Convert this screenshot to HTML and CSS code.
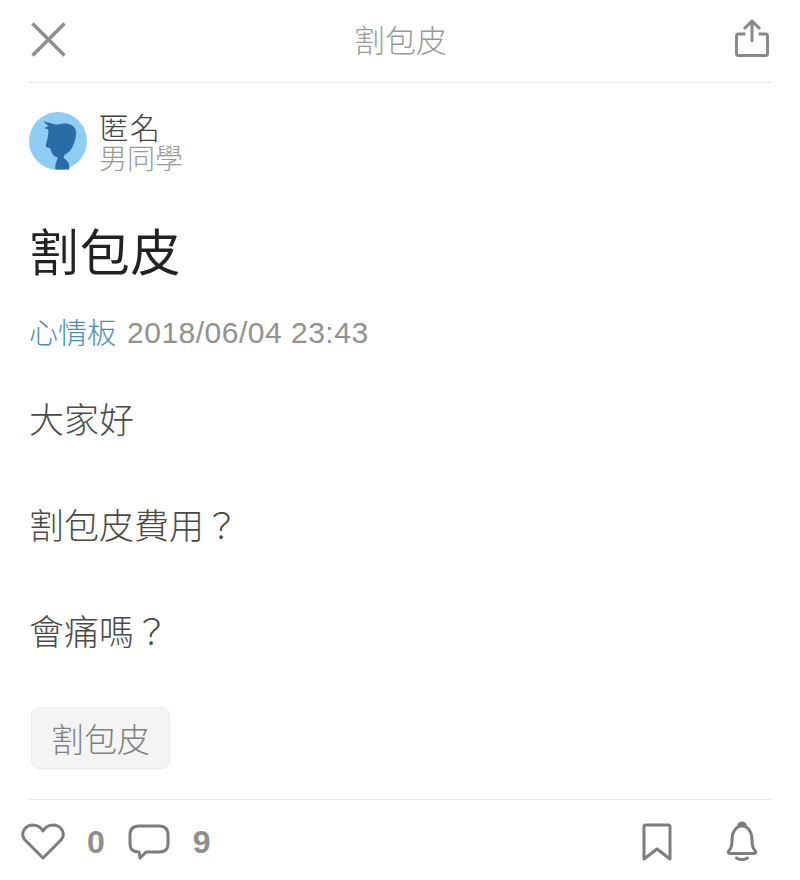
FILE: index.html
```html
<!DOCTYPE html>
<html lang="zh-Hant">
<head>
<meta charset="utf-8">
<title>割包皮</title>
<link rel="stylesheet" href="styles.css">
</head>
<body>
<div class="page">
  <header class="topbar">
    <svg class="icon-close" width="35" height="35" viewBox="0 0 35 35"><path d="M1.500 1.500L33.500 33.500M33.500 1.500L1.500 33.500" fill="none" stroke="#8f8f8f" stroke-width="3.500"/></svg>
    <div class="topbar-title">割包皮</div>
    <svg class="icon-share" width="34" height="38" viewBox="0 0 34 38"><path d="M10.500 15H3.500a2 2 0 0 0-2 2V34.500a2 2 0 0 0 2 2H30.500a2 2 0 0 0 2-2V17a2 2 0 0 0-2-2H23.500M17 23V2M9 10L17 2L25 10" fill="none" stroke="#8a8a8a" stroke-width="3"/></svg>
  </header>
  <section class="author">
    <svg class="avatar" width="58" height="58" viewBox="0 0 58 58">
      <circle cx="29" cy="29" r="29" fill="#90cdf2"/>
      <path d="M14.300 9.300L27.700 12.700C31 12 36 11 39 11.700C43 12.500 46 15 47 19C47.700 24 45.500 31 43 36C41 39 39 41 36 42.500C35 44 34.500 45 34.500 46C37.500 47.500 39.500 50 40 53C40.500 55 40.500 56 40 57.500H26.500C26 54 26.500 51 27.700 49C28 47.500 28.500 46.500 29.300 46C27 45 25 44 24 42.700C22.500 40.500 21.500 38 21 36C18.500 36 16.500 35 16.700 33.300C17 31 18.500 28 18.800 24.300C19.100 22 19.500 20 19.500 17.700L15.300 16L19.300 14.300Z" fill="#2b6ba8"/>
    </svg>
    <div class="author-text">
      <div class="author-name">匿名</div>
      <div class="author-role">男同學</div>
    </div>
  </section>
  <h1 class="post-title">割包皮</h1>
  <div class="meta"><span class="board">心情板</span><span class="date">2018/06/04 23:43</span></div>
  <article class="body">
    <p>大家好</p>
    <p>割包皮費用？</p>
    <p>會痛嗎？</p>
  </article>
  <div class="tag">割包皮</div>
  <footer class="actions">
    <svg class="icon-heart" width="44" height="38" viewBox="0 0 44 38"><path d="M22 35L4 17C-1 11 3 3 11 2C16 2 20 4 22 8C24 4 28 2 33 2C41 3 45 11 40 17Z" fill="none" stroke="#7d7d7d" stroke-width="3" stroke-linejoin="round"/></svg>
    <span class="count count-like">0</span>
    <svg class="icon-comment" width="42" height="36" viewBox="0 0 42 36"><path d="M11 2H31C37 2 40 5 40 11V20C40 25 37 28 31 28H18L12 34L11 28C5 28 2 25 2 20V11C2 5 5 2 11 2Z" fill="none" stroke="#7d7d7d" stroke-width="3" stroke-linejoin="round"/></svg>
    <span class="count count-comment">9</span>
    <svg class="icon-bookmark" width="30" height="38" viewBox="0 0 30 38"><path d="M2 36V3.500A1.500 1.500 0 0 1 3.500 2H26.500A1.500 1.500 0 0 1 28 3.500V36L15 26Z" fill="none" stroke="#7d7d7d" stroke-width="3" stroke-linejoin="round"/></svg>
    <svg class="icon-bell" width="32" height="40" viewBox="0 0 32 40"><path d="M12.500 5.500A3.500 3.500 0 1 1 19.500 5.500M6 19C6 11 10 5 16 5C22 5 26 11 26 19C26 25 26.500 27 28.500 29C30.500 31 30 32.500 28 32.500H4C2 32.500 1.500 31 3.500 29C5.500 27 6 25 6 19ZM10.500 37C13 39 19 39 21.500 37" fill="none" stroke="#7d7d7d" stroke-width="3" stroke-linecap="round"/></svg>
  </footer>
</div>
</body>
</html>
```
FILE: styles.css
```css
* { box-sizing: border-box; }
html, body { margin: 0; padding: 0; background: #fff; }
body {
  font-family: "Noto Sans CJK TC", "Liberation Sans", sans-serif;
  font-weight: 300;
}
.page {
  width: 800px;
  height: 880px;
  padding: 0 29px;
  overflow: hidden;
}
.topbar {
  height: 83px;
  border-bottom: 1px solid #e8e8e8;
  display: flex;
  align-items: center;
  justify-content: space-between;
  padding: 0 2px 3px 2px;
}
.topbar-title {
  font-size: 31px;
  line-height: 40px;
  color: #999;
  margin-top: -1px;
}
.icon-share { margin-top: -3px; }
.author {
  display: flex;
  align-items: flex-start;
  gap: 12px;
  margin-top: 29px;
  height: 58px;
}
.author-text { display: flex; flex-direction: column; margin-top: -1px; }
.author-name { font-size: 30px; line-height: 30px; color: #444; letter-spacing: 1px; }
.author-role { font-size: 28px; line-height: 30px; color: #999; margin-top: 1px; }
.post-title {
  margin: 46px 0 0;
  font-size: 50px;
  line-height: 66px;
  font-weight: 400;
  color: #222;
  letter-spacing: 0.7px;
}
.meta {
  margin-top: 29px;
  font-size: 29px;
  line-height: 42px;
  white-space: nowrap;
  display: flex;
  gap: 11px;
}
.board { color: #4a8db8; margin-top: -1px; }
.date {
  font-family: "Liberation Sans", sans-serif;
  color: #929292;
  font-size: 30px;
  letter-spacing: 0.5px;
  margin-top: 1px;
}
.body { margin-top: 37px; }
.body p {
  margin: 0 0 53px;
  font-size: 35px;
  line-height: 53px;
  color: #4a4a4a;
}
.tag {
  width: 139px;
  height: 62px;
  margin: -2px 0 0 2px;
  display: flex;
  align-items: center;
  justify-content: center;
  background: #f4f4f4;
  border: 1px solid #eee;
  border-radius: 8px;
  font-size: 33px;
  color: #808080;
}
.actions {
  margin-top: 30px;
  height: 81px;
  border-top: 1px solid #e8e8e8;
  display: flex;
  align-items: center;
  padding: 4px 13px 0 0;
}
.icon-heart { margin-left: -8px; }
.count {
  font-family: "Liberation Sans", sans-serif;
  font-size: 32px;
  font-weight: 700;
  color: #8f8f8f;
}
.count-like { margin-left: 22px; }
.count-comment { margin-left: 23px; }
.icon-comment { margin-left: 23px; }
.icon-bookmark { margin-left: auto; }
.icon-bell { margin-left: 54px; margin-top: -2px; }
```
